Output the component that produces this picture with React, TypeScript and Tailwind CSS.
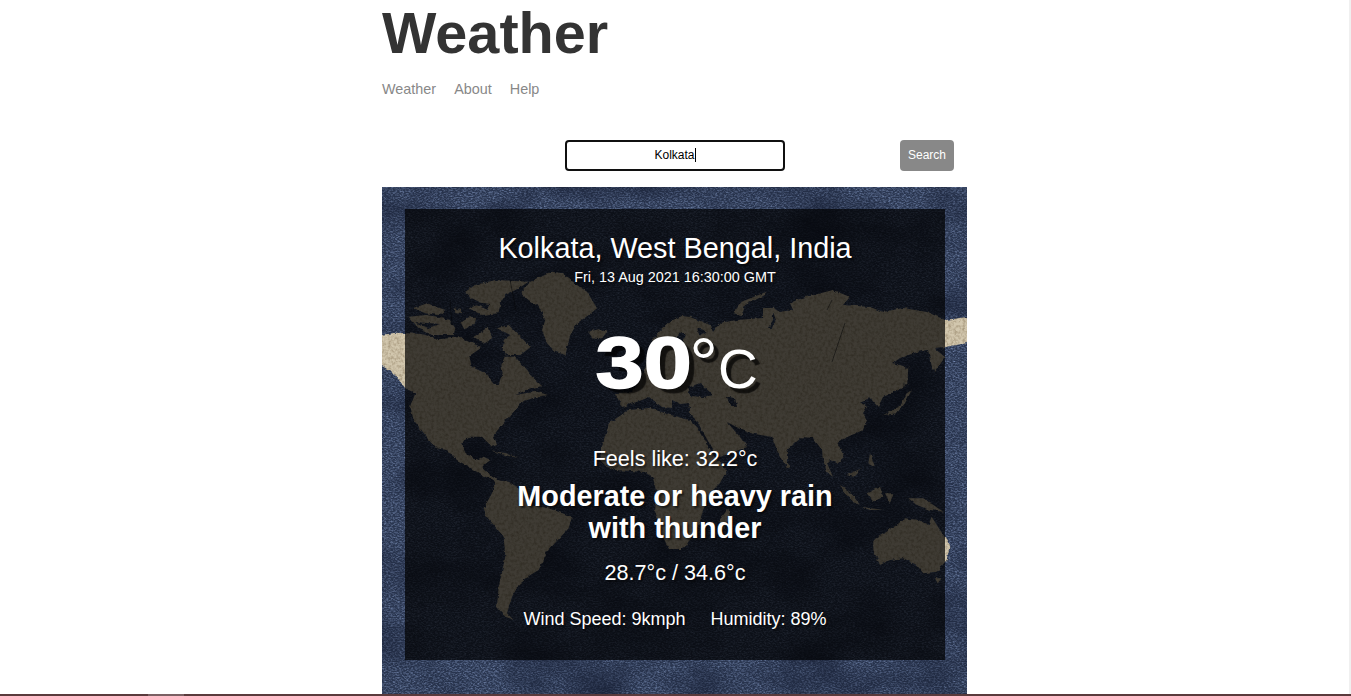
const z = (bx: number, by: number, pts: number[]) => {
  const out: string[] = [];
  for (let i = 0; i < pts.length; i += 2) out.push(`${bx + pts[i] / 3},${by + pts[i + 1] / 3}`);
  return out.join(" ");
};
const q6 = (p: number[]) => z(382, 260, p);
const q7 = (p: number[]) => z(670, 260, p);
const q8 = (p: number[]) => z(382, 450, p);
const q9 = (p: number[]) => z(670, 450, p);

const land: string[] = [
  // North America + Central America
  q6([-30, 225, 0, 225, 40, 218, 70, 220, 120, 222, 170, 238, 230, 232, 270, 250, 300, 262, 262, 288, 268, 320, 310, 340, 335, 372, 350, 372, 362, 340, 358, 315, 368, 290, 400, 290, 445, 345, 480, 378, 445, 385, 400, 405, 430, 400, 465, 395, 498, 405, 460, 412, 420, 425, 395, 455, 372, 480, 335, 525, 345, 555, 330, 560, 300, 530, 260, 530, 238, 550, 255, 585, 290, 600, 305, 590, 325, 600, 300, 620, 330, 650, 352, 662, 345, 668, 300, 645, 260, 620, 225, 600, 195, 570, 165, 565, 130, 525, 95, 480, 85, 440, 100, 400, 70, 385, 55, 365, 30, 335, 0, 318, -30, 315]),
  // Arctic
  q6([250, 95, 280, 75, 340, 60, 440, 65, 410, 85, 370, 105, 355, 130, 350, 160, 300, 165, 260, 145, 300, 130, 270, 115]),
  q6([80, 170, 130, 165, 200, 175, 220, 205, 215, 225, 150, 225, 110, 205]),
  q6([95, 145, 135, 130, 190, 150, 170, 165, 130, 160]),
  q6([215, 145, 240, 150, 240, 165, 220, 165]),
  q6([230, 175, 280, 170, 275, 195, 245, 205]),
  q6([275, 230, 320, 200, 330, 235, 305, 250]),
  q6([365, 240, 385, 225, 345, 205, 380, 195, 420, 235, 445, 262, 415, 285, 375, 285, 362, 270]),
  // Greenland and Iceland
  q6([415, 100, 445, 65, 510, 35, 540, 40, 585, 75, 615, 95, 645, 145, 620, 165, 585, 190, 565, 225, 550, 285, 520, 275, 495, 250, 480, 210, 490, 180, 470, 140, 440, 120]),
  q6([618, 215, 650, 208, 675, 215, 660, 235, 630, 232]),
  // Eurasia
  "650,345 659,332 672,320 682,316 690,317 710,325 713,332 720,323 737,320 763,318 763,308 773,308 780,312 793,310 790,303 802,298 833,290 850,297 843,305 870,307 883,312 903,308 927,312 945,320 967,317 990,317 990,343 967,343 945,347 934,348 945,357 935,372 932,367 928,350 917,352 900,358 893,363 905,367 907,375 903,388 883,397 878,407 870,398 860,402 867,407 863,413 867,420 863,430 845,438 837,442 841,450 844,457 837,463 830,460 827,463 833,477 827,472 823,460 822,450 813,438 802,437 787,450 787,467 782,460 777,450 772,437 750,433 742,430 727,422 740,437 747,447 720,457 713,450 698,423 690,415 690,408 673,408 662,407 649,397 642,400 622,407 615,393 632,392 639,383 645,370",
  // Africa
  "602,447 609,423 629,410 650,408 670,415 690,420 698,428 713,455 727,470 720,483 710,493 702,513 700,522 687,545 682,549 669,549 662,535 655,510 657,495 653,478 645,472 615,470 606,466 600,460",
  q9([145, 215, 175, 175, 180, 200, 160, 240]),
  // South America
  q8([340, 90, 380, 95, 420, 120, 440, 165, 500, 175, 570, 200, 560, 235, 495, 305, 470, 360, 445, 375, 410, 405, 390, 440, 375, 490, 395, 510, 370, 500, 345, 470, 350, 410, 370, 320, 365, 260, 310, 195, 305, 175, 330, 130]),
  q8([320, 0, 370, 10, 410, 25, 370, 15]),
  // Asia islands
  q7([190, 160, 215, 125, 290, 95, 285, 105, 225, 135, 215, 165]),
  q7([640, 465, 690, 440, 710, 400, 725, 390, 705, 430, 680, 460]),
  q7([705, 330, 715, 320, 712, 370, 703, 380]),
  q9([345, 35, 360, 50, 350, 55]),
  q9([510, 105, 540, 125, 570, 165, 550, 155, 520, 125]),
  q9([570, 170, 640, 180, 600, 180]),
  q9([590, 130, 630, 110, 640, 140, 610, 155]),
  q9([645, 130, 670, 130, 660, 160]),
  q9([715, 145, 760, 145, 820, 185, 780, 180, 740, 165]),
  q9([600, 10, 615, 50, 595, 40]),
  q9([530, 75, 575, 55, 550, 80]),
  // Australia
  q9([610, 270, 650, 245, 680, 225, 705, 205, 745, 210, 775, 225, 785, 200, 810, 240, 840, 285, 830, 330, 800, 365, 760, 370, 740, 345, 700, 325, 660, 330, 630, 345, 610, 300]),
  q9([795, 385, 815, 385, 803, 400]),
];

const seas: string[] = [
  "687,388 700,383 713,395 703,397 690,396",
  "727,397 735,398 737,407 730,406",
  "672,345 680,332 686,335 678,350",
  "773,312 776,320 772,328 768,328 773,320",
  "697,328 708,332 700,336",
  "672,400 680,404 690,403 688,409 672,409",
  // Arctic channels
  "440,318 452,312 470,316 462,322",
  "464,300 490,304 488,310",
  "415,322 440,324 428,328",
];

const scratches = [
  "M845 323 L832 362",
  "M832 300 L827 310",
  "M450 300 L452 325",
  "M510 280 L516 310",
];

function Background() {
  return (
    <svg className="absolute inset-0 w-[585px] h-[540px]" viewBox="382 187 585 540" aria-hidden="true">
      <defs>
        <filter id="grain" x="0" y="0" width="100%" height="100%" colorInterpolationFilters="sRGB">
          <feTurbulence type="fractalNoise" baseFrequency="0.45 0.8" numOctaves="4" seed="7" />
          <feColorMatrix type="matrix" values="0 0 0 0 0.50  0 0 0 0 0.58  0 0 0 0 0.74  1.5 0 0 0 -0.58" />
        </filter>
        <filter id="blotch" x="0" y="0" width="100%" height="100%" colorInterpolationFilters="sRGB">
          <feTurbulence type="fractalNoise" baseFrequency="0.014 0.02" numOctaves="4" seed="11" />
          <feColorMatrix type="matrix" values="0 0 0 0 0.08  0 0 0 0 0.11  0 0 0 0 0.19  1.3 0 0 0 -0.5" />
        </filter>
        <filter id="paper" x="0" y="0" width="100%" height="100%" colorInterpolationFilters="sRGB">
          <feTurbulence type="fractalNoise" baseFrequency="0.35" numOctaves="3" seed="3" />
          <feColorMatrix type="matrix" values="0 0 0 0 0.40  0 0 0 0 0.32  0 0 0 0 0.20  0.8 0 0 0 -0.3" />
        </filter>
        <filter id="rough" x="-5%" y="-5%" width="110%" height="110%">
          <feTurbulence type="fractalNoise" baseFrequency="0.22" numOctaves="2" seed="5" result="n" />
          <feDisplacementMap in="SourceGraphic" in2="n" scale="3.5" xChannelSelector="R" yChannelSelector="G" />
        </filter>
        <mask id="land" maskUnits="userSpaceOnUse" x="382" y="187" width="585" height="540">
          <g filter="url(#rough)">
            {land.map((p, i) => (
              <polygon key={i} points={p} fill="#fff" />
            ))}
            {seas.map((p, i) => (
              <polygon key={i} points={p} fill="#000" />
            ))}
          </g>
        </mask>
      </defs>
      <rect x="382" y="187" width="585" height="540" fill="#2a3650" />
      <rect x="382" y="187" width="585" height="540" filter="url(#grain)" />
      <rect x="382" y="187" width="585" height="540" filter="url(#blotch)" />
      <g mask="url(#land)">
        <rect x="382" y="187" width="585" height="540" fill="#d2c7ae" />
        <rect x="382" y="187" width="585" height="540" filter="url(#paper)" />
      </g>
      {scratches.map((d, i) => (
        <path key={i} d={d} stroke="#0b0d12" strokeWidth="1" opacity="0.5" fill="none" />
      ))}
    </svg>
  );
}

export default function App() {
  return (
    <div className="flex flex-col h-[696px] w-full overflow-hidden bg-white [font-family:'Liberation_Sans',Arial,sans-serif]">
      <div className="flex flex-1 min-h-0">
        <main className="flex-1 min-w-0 overflow-hidden">
          <div className="mx-auto w-[585px]">
            <h1 className="text-[57.6px] leading-[66px] font-bold text-[#333333]">Weather</h1>
            <nav className="mt-[13px] flex gap-[18px] text-[14.4px] leading-[20px] text-[#888888]">
              <a>Weather</a>
              <a>About</a>
              <a>Help</a>
            </nav>
            <form className="mt-[41px] flex items-center pl-[183px]">
              <div className="flex h-[31px] w-[220px] items-center justify-center rounded-[4px] border-2 border-[#101010] bg-white pb-[1px] text-[12px] text-black">
                <span>Kolkata</span>
                <span className="h-[14px] w-px bg-black" />
              </div>
              <button type="button" className="ml-[115px] h-[31px] w-[54px] rounded-[4px] bg-[#888888] pb-[2px] text-[12px] text-white">
                Search
              </button>
            </form>
            <section className="relative mt-[16px] h-[540px] overflow-hidden p-[22px] pl-[23px]">
              <Background />
              <div className="relative flex h-[451px] w-[540px] flex-col items-center bg-black/70 text-center text-white [text-shadow:2px_2px_2px_rgba(0,0,0,0.55)]">
                <h2 className="mt-[22px] text-[28.8px] leading-[34px]">Kolkata, West Bengal, India</h2>
                <p className="mt-[3px] text-[14.4px] leading-[18px]">Fri, 13 Aug 2021 16:30:00 GMT</p>
                <div className="mt-[25px] flex h-[104px] items-baseline [text-shadow:5px_5px_1px_rgba(0,0,0,0.7)]">
                  <span className="inline-block w-[97px] origin-left scale-x-[1.2] pl-[3px] text-left text-[72px] leading-[104px] font-bold [-webkit-text-stroke:1.5px_white]">30</span>
                  <span className="text-[72px] leading-[104px]">°</span>
                  <span className="text-[55px] leading-[104px]">C</span>
                </div>
                <p className="mt-[31px] text-[21.6px] leading-[26px]">Feels like: 32.2°c</p>
                <p className="mt-[8px] w-[330px] text-[28.8px] leading-[32px] font-bold">Moderate or heavy rain with thunder</p>
                <p className="mt-[16px] text-[21.6px] leading-[26px]">28.7°c / 34.6°c</p>
                <div className="mt-[22px] flex gap-[25px] text-[18px] leading-[22px]">
                  <span>Wind Speed: 9kmph</span>
                  <span>Humidity: 89%</span>
                </div>
              </div>
            </section>
          </div>
        </main>
        <div className="w-[2px] bg-[#f0f0f0]" />
      </div>
      <div className="flex h-[2px] bg-[#5a3a3c]">
        <div className="ml-[148px] w-[36px] bg-[#7b6063]" />
      </div>
    </div>
  );
}
